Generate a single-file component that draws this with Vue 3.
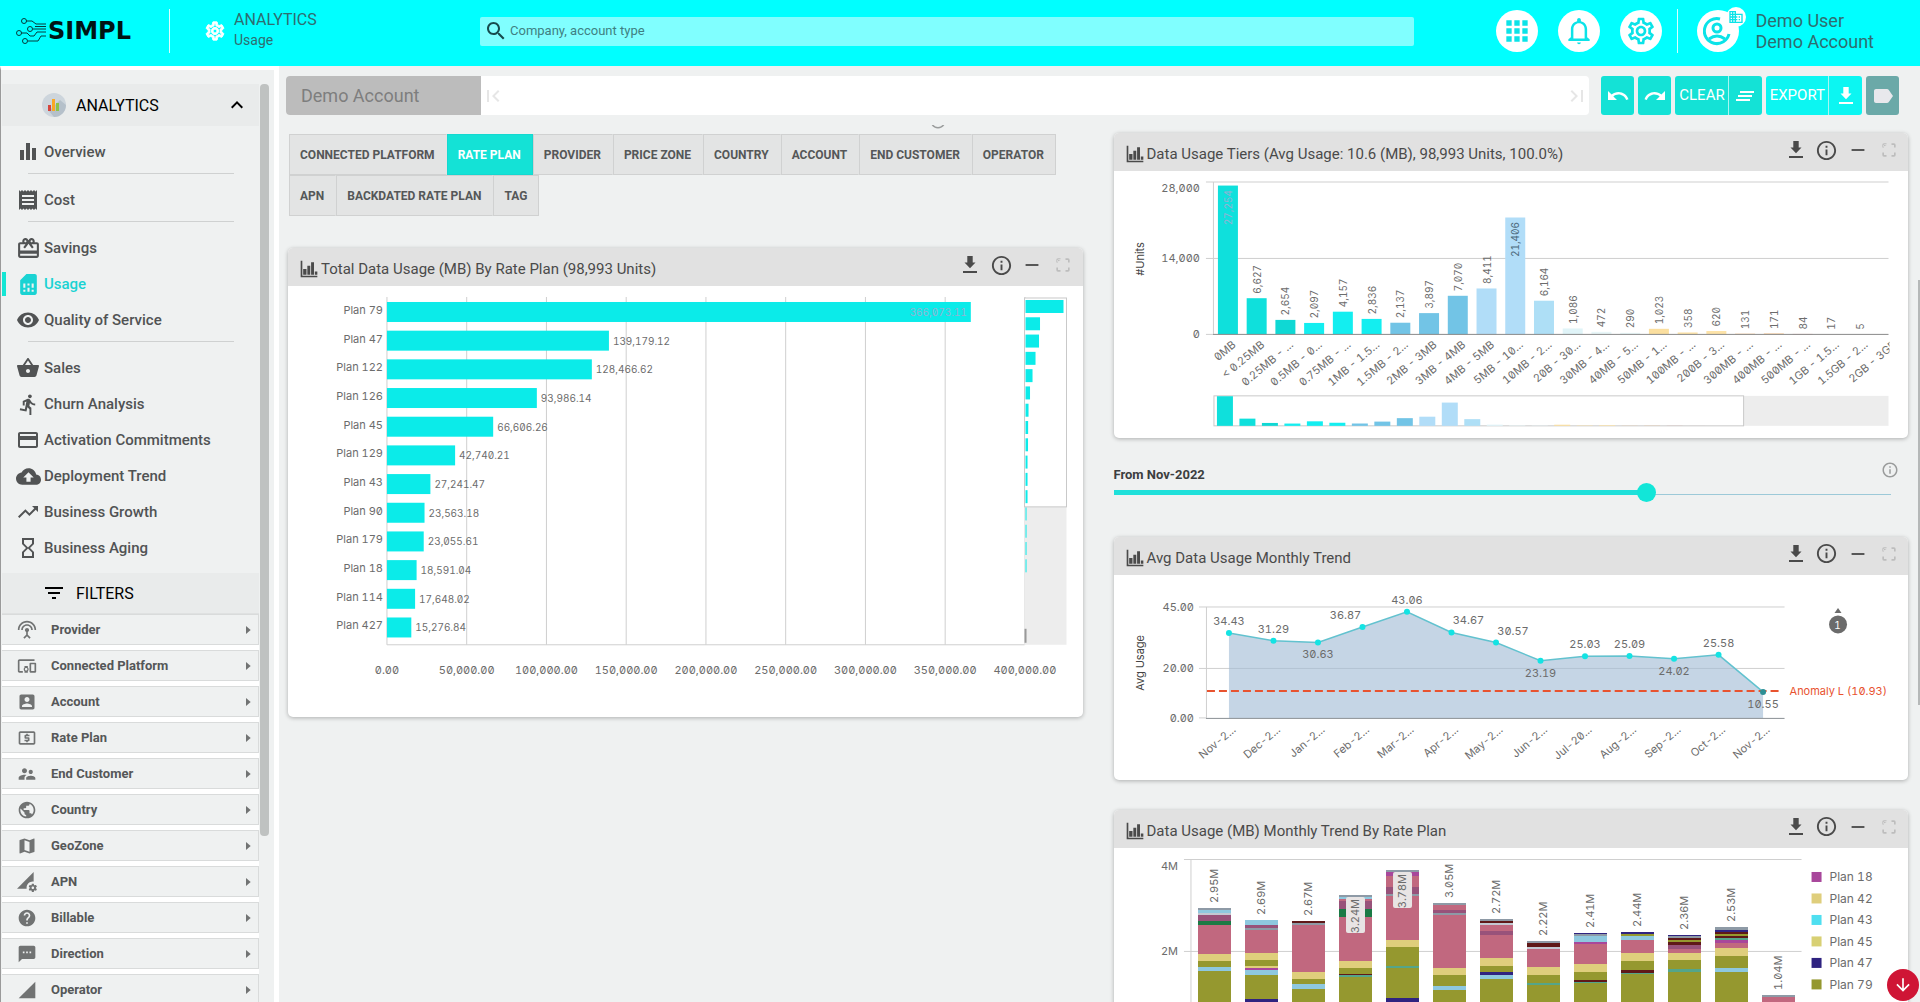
<script setup>
import { h, ref } from 'vue'

const P = {
  apps: 'M4 8h4V4H4v4zm6 12h4v-4h-4v4zm-6 0h4v-4H4v4zm0-6h4v-4H4v4zm6 0h4v-4h-4v4zm6-10v4h4V4h-4zm-6 4h4V4h-4v4zm6 6h4v-4h-4v4zm0 6h4v-4h-4v4z',
  bell: 'M12 22.500c.8 0 1.500-.6 1.500-1.300h-3c0 .7.7 1.300 1.500 1.300zM18.500 17v-6.500c0-3.200-2-5.800-5-6.400V3c0-.8-.7-1.500-1.500-1.500s-1.500.7-1.500 1.500v1.100c-3 .6-5 3.200-5 6.400V17l-2 1.600V20h17v-1.400l-2-1.600zm-2 1h-9v-7.500c0-2.600 1.900-4.700 4.500-4.700s4.500 2.100 4.500 4.700V18z',
  gear: 'M19.430 12.980c.04-.32.07-.64.07-.98s-.03-.66-.07-.98l2.110-1.650c.19-.15.24-.42.12-.64l-2-3.460c-.09-.16-.26-.25-.44-.25-.06 0-.12.01-.17.03l-2.490 1c-.52-.4-1.080-.73-1.690-.98l-.38-2.650C14.460 2.180 14.250 2 14 2h-4c-.25 0-.46.18-.49.42l-.38 2.650c-.61.25-1.170.59-1.690.98l-2.490-1c-.06-.02-.12-.03-.18-.03-.17 0-.34.09-.43.25l-2 3.460c-.13.22-.07.49.12.64l2.110 1.650c-.04.32-.07.65-.07.98s.03.66.07.98l-2.110 1.650c-.19.15-.24.42-.12.64l2 3.460c.09.16.26.25.44.25.06 0 .12-.01.17-.03l2.490-1c.52.4 1.080.73 1.690.98l.38 2.650c.03.24.24.42.49.42h4c.25 0 .46-.18.49-.42l.38-2.650c.61-.25 1.170-.59 1.690-.98l2.490 1c.06.02.12.03.18.03.17 0 .34-.09.43-.25l2-3.460c.12-.22.07-.49-.12-.64l-2.110-1.650zm-1.980-1.710c.04.31.05.52.05.73 0 .21-.02.43-.05.73l-.14 1.130.89.7 1.080.84-.7 1.210-1.270-.51-1.040-.42-.9.68c-.43.32-.84.56-1.250.73l-1.060.43-.16 1.130-.2 1.350h-1.400l-.19-1.350-.16-1.130-1.060-.43c-.43-.18-.83-.41-1.230-.71l-.91-.7-1.060.43-1.270.51-.7-1.210 1.080-.84.89-.7-.14-1.130c-.03-.31-.05-.54-.05-.74s.02-.43.05-.73l.14-1.130-.89-.7-1.080-.84.7-1.210 1.270.51 1.040.42.9-.68c.43-.32.84-.56 1.250-.73l1.060-.43.16-1.130.2-1.350h1.390l.19 1.350.16 1.130 1.060.43c.43.18.83.41 1.230.71l.91.7 1.060-.43 1.270-.51.7 1.210-1.070.85-.89.7.14 1.130zM12 8c-2.210 0-4 1.790-4 4s1.790 4 4 4 4-1.790 4-4-1.790-4-4-4zm0 6c-1.100 0-2-.9-2-2s.9-2 2-2 2 .9 2 2-.9 2-2 2z',
  search: 'M15.500 14h-.79l-.28-.27C15.410 12.590 16 11.110 16 9.500 16 5.910 13.090 3 9.500 3S3 5.910 3 9.500 5.910 16 9.500 16c1.610 0 3.090-.59 4.230-1.570l.27.28v.79l5 4.990L20.490 19l-4.990-5zm-6 0C7.010 14 5 11.990 5 9.500S7.010 5 9.500 5 14 7.010 14 9.500 11.990 14 9.500 14z',
  bars: 'M4 10h4v10H4zM10 3h4v17h-4zM16 8h4v12h-4z',
  receipt: 'M18 17H6v-2h12v2zm0-4H6v-2h12v2zm0-4H6V7h12v2zM3 22l1.500-1.500L6 22l1.500-1.500L9 22l1.500-1.500L12 22l1.500-1.500L15 22l1.500-1.500L18 22l1.500-1.500L21 22V2l-1.500 1.500L18 2l-1.500 1.500L15 2l-1.500 1.500L12 2l-1.500 1.500L9 2 7.500 3.500 6 2 4.500 3.500 3 2v20z',
  gift: 'M20 6h-2.180c.11-.31.18-.65.18-1 0-1.660-1.340-3-3-3-1.050 0-1.960.54-2.500 1.350l-.5.67-.5-.68C10.960 2.540 10.050 2 9 2 7.340 2 6 3.340 6 5c0 .35.07.69.18 1H4c-1.110 0-1.990.89-1.990 2L2 19c0 1.110.89 2 2 2h16c1.110 0 2-.89 2-2V8c0-1.110-.89-2-2-2zm-5-2c.55 0 1 .45 1 1s-.45 1-1 1-1-.45-1-1 .45-1 1-1zM9 4c.55 0 1 .45 1 1s-.45 1-1 1-1-.45-1-1 .45-1 1-1zm11 15H4v-2h16v2zm0-5H4V8h5.080L7 10.830 8.620 12 11 8.760l1-1.360 1 1.360L15.380 12 17 10.830 14.920 8H20v6z',
  sim: 'M19.990 4c0-1.100-.89-2-1.990-2h-8L4 8v12c0 1.100.9 2 2 2h12.010c1.100 0 1.990-.9 1.990-2l-.01-16zM9 19H7v-2h2v2zm8 0h-2v-2h2v2zm-8-4H7v-4h2v4zm4 4h-2v-4h2v4zm0-6h-2v-2h2v2zm4 2h-2v-4h2v4z',
  eye: 'M12 4.500C7 4.500 2.730 7.610 1 12c1.730 4.390 6 7.500 11 7.500s9.270-3.110 11-7.500c-1.730-4.390-6-7.500-11-7.500zM12 17c-2.760 0-5-2.240-5-5s2.240-5 5-5 5 2.240 5 5-2.240 5-5 5zm0-8c-1.660 0-3 1.340-3 3s1.340 3 3 3 3-1.340 3-3-1.340-3-3-3z',
  basket: 'M17.210 9l-4.380-6.560c-.19-.28-.51-.42-.83-.42-.32 0-.64.14-.83.43L6.790 9H2c-.55 0-1 .45-1 1 0 .09.01.18.04.27l2.540 9.270c.23.84 1 1.460 1.920 1.460h13c.92 0 1.690-.62 1.930-1.460l2.540-9.270L23 10c0-.55-.45-1-1-1h-4.790zM9 9l3-4.400L15 9H9zm3 8c-1.100 0-2-.9-2-2s.9-2 2-2 2 .9 2 2-.9 2-2 2z',
  run: 'M13.490 5.480c1.100 0 2-.9 2-2s-.9-2-2-2-2 .9-2 2 .9 2 2 2zm-3.600 13.900l1-4.400 2.100 2v6h2v-7.500l-2.100-2 .6-3c1.300 1.500 3.300 2.500 5.500 2.500v-2c-1.900 0-3.500-1-4.300-2.400l-1-1.600c-.4-.6-1-1-1.700-1-.3 0-.5.1-.8.1l-5.200 2.200v4.700h2v-3.400l1.800-.7-1.600 8.100-4.900-1-.4 2 7 1.400z',
  card: 'M20 4H4c-1.110 0-1.990.89-1.990 2L2 18c0 1.110.89 2 2 2h16c1.110 0 2-.89 2-2V6c0-1.110-.89-2-2-2zm0 14H4v-6h16v6zm0-10H4V6h16v2z',
  cloud: 'M19.350 10.040C18.670 6.590 15.640 4 12 4 9.110 4 6.600 5.640 5.350 8.040 2.340 8.360 0 10.910 0 14c0 3.310 2.690 6 6 6h13c2.760 0 5-2.240 5-5 0-2.640-2.050-4.780-4.650-4.960zM14 13v4h-4v-4H7l5-5 5 5h-3z',
  trend: 'M16 6l2.290 2.290-4.880 4.880-4-4L2 16.590 3.410 18l6-6 4 4 6.300-6.290L22 12V6z',
  glass: 'M6 2v6h.01L6 8.010 10 12l-4 4 .01.01H6V22h12v-5.990h-.01L18 16l-4-4 4-3.990-.01-.01H18V2H6zm10 14.500V20H8v-3.500l4-4 4 4zm-4-5l-4-4V4h8v3.500l-4 4z',
  filter: 'M10 18h4v-2h-4v2zM3 6v2h18V6H3zm3 7h12v-2H6v2z',
  antenna: 'M12 5c-3.870 0-7 3.130-7 7h2c0-2.760 2.240-5 5-5s5 2.240 5 5h2c0-3.870-3.130-7-7-7zm1 9.290c.88-.39 1.500-1.260 1.500-2.290 0-1.380-1.120-2.500-2.500-2.500S9.500 10.620 9.500 12c0 1.020.62 1.900 1.500 2.290v3.300L7.590 21 9 22.410l3-3 3 3L16.410 21 13 17.590v-3.300zM12 1C5.930 1 1 5.930 1 12h2c0-4.970 4.030-9 9-9s9 4.030 9 9h2c0-6.070-4.930-11-11-11z',
  devices: 'M3 6h18V4H3c-1.100 0-2 .9-2 2v12c0 1.100.9 2 2 2h4v-2H3V6zm10 6H9v1.780c-.61.55-1 1.330-1 2.220s.39 1.670 1 2.220V20h4v-1.780c.61-.55 1-1.340 1-2.220s-.39-1.670-1-2.220V12zm-2 5.500c-.83 0-1.500-.67-1.500-1.500s.67-1.500 1.500-1.500 1.500.67 1.500 1.500-.67 1.500-1.500 1.500zM22 8h-6c-.5 0-1 .5-1 1v10c0 .5.5 1 1 1h6c.5 0 1-.5 1-1V9c0-.5-.5-1-1-1zm-1 10h-4v-8h4v8z',
  account: 'M3 5v14c0 1.100.89 2 2 2h14c1.100 0 2-.9 2-2V5c0-1.100-.9-2-2-2H5c-1.110 0-2 .9-2 2zm12 4c0 1.660-1.340 3-3 3s-3-1.340-3-3 1.340-3 3-3 3 1.340 3 3zm-9 8c0-2 4-3.100 6-3.100s6 1.100 6 3.100v1H6v-1z',
  money: 'M11 17h2v-1h1c.55 0 1-.45 1-1v-3c0-.55-.45-1-1-1h-3v-1h4V8h-2V7h-2v1h-1c-.55 0-1 .45-1 1v3c0 .55.45 1 1 1h3v1H9v2h2v1zm9-13H4c-1.110 0-1.990.89-1.990 2L2 18c0 1.110.89 2 2 2h16c1.110 0 2-.89 2-2V6c0-1.110-.89-2-2-2zm0 14H4V6h16v12z',
  people: 'M16.500 12c1.380 0 2.490-1.120 2.490-2.500S17.880 7 16.500 7C15.120 7 14 8.120 14 9.500s1.120 2.500 2.500 2.500zM9 11c1.660 0 2.990-1.340 2.990-3S10.660 5 9 5C7.340 5 6 6.340 6 8s1.340 3 3 3zm7.500 3c-1.830 0-5.500.92-5.500 2.750V19h11v-2.250c0-1.830-3.670-2.750-5.500-2.750zM9 13c-2.330 0-7 1.170-7 3.500V19h7v-2.250c0-.85.33-2.340 2.370-3.470C10.500 13.100 9.660 13 9 13z',
  globe: 'M12 2C6.480 2 2 6.480 2 12s4.480 10 10 10 10-4.480 10-10S17.520 2 12 2zm-1 17.930c-3.950-.49-7-3.850-7-7.930 0-.62.08-1.210.21-1.790L9 15v1c0 1.100.9 2 2 2v1.930zm6.900-2.540c-.26-.81-1-1.390-1.900-1.390h-1v-3c0-.55-.45-1-1-1H8v-2h2c.55 0 1-.45 1-1V7h2c1.100 0 2-.9 2-2v-.41c2.930 1.190 5 4.060 5 7.410 0 2.080-.8 3.970-2.100 5.390z',
  map: 'M20.500 3l-.16.03L15 5.100 9 3 3.360 4.900c-.21.07-.36.25-.36.48V20.500c0 .28.22.5.5.5l.16-.03L9 18.900l6 2.100 5.640-1.900c.21-.07.36-.25.36-.48V3.500c0-.28-.22-.5-.5-.5zM15 19l-6-2.110V5l6 2.110V19z',
  apn: 'M18.990 11.500c.34 0 .67.03 1 .07L20 0 0 20h11.560c-.04-.33-.07-.66-.07-1 0-4.140 3.360-7.500 7.500-7.500zm3.710 7.990c.02-.16.04-.32.04-.49 0-.17-.01-.33-.04-.49l1.060-.83c.09-.08.12-.21.06-.32l-1-1.730c-.06-.11-.19-.15-.31-.11l-1.240.5c-.26-.2-.54-.37-.85-.49l-.19-1.320c-.01-.12-.12-.21-.24-.21h-2c-.12 0-.23.09-.25.21l-.19 1.320c-.3.13-.59.29-.85.49l-1.240-.5c-.11-.04-.24 0-.31.11l-1 1.730c-.06.11-.04.24.06.32l1.060.83c-.02.16-.03.32-.03.49 0 .17.01.33.03.49l-1.060.83c-.09.08-.12.21-.06.32l1 1.730c.06.11.19.15.31.11l1.240-.5c.26.2.54.37.85.49l.19 1.320c.02.12.12.21.25.21h2c.12 0 .23-.09.25-.21l.19-1.320c.3-.13.59-.29.84-.49l1.250.5c.11.04.24 0 .31-.11l1-1.730c.06-.11.03-.24-.06-.32l-1.070-.83zm-3.710 1.010c-.83 0-1.500-.67-1.500-1.500s.67-1.500 1.500-1.500 1.500.67 1.500 1.500-.67 1.500-1.500 1.500z',
  help: 'M12 2C6.480 2 2 6.480 2 12s4.480 10 10 10 10-4.480 10-10S17.520 2 12 2zm1 17h-2v-2h2v2zm2.070-7.750l-.9.92C13.450 12.900 13 13.500 13 15h-2v-.5c0-1.100.45-2.100 1.170-2.830l1.240-1.260c.37-.36.59-.86.59-1.410 0-1.100-.9-2-2-2s-2 .9-2 2H8c0-2.210 1.790-4 4-4s4 1.790 4 4c0 .88-.36 1.680-.93 2.250z',
  sms: 'M20 2H4c-1.100 0-1.990.9-1.990 2L2 22l4-4h14c1.100 0 2-.9 2-2V4c0-1.100-.9-2-2-2zM9 11H7V9h2v2zm4 0h-2V9h2v2zm4 0h-2V9h2v2z',
  signal: 'M2 22h20V2z',
  undo: 'M12.500 8c-2.650 0-5.050.99-6.900 2.600L2 7v9h9l-3.620-3.620c1.390-1.160 3.160-1.880 5.120-1.880 3.540 0 6.550 2.310 7.600 5.500l2.370-.78C21.080 11.030 17.150 8 12.500 8z',
  redo: 'M18.400 10.600C16.550 8.990 14.150 8 11.500 8c-4.650 0-8.580 3.030-9.960 7.220L3.900 16c1.050-3.190 4.050-5.500 7.600-5.500 1.950 0 3.730.72 5.120 1.880L13 16h9V7l-3.600 3.600z',
  clear: 'M5 13h14v-2H5v2zm-2 4h14v-2H3v2zM7 7v2h14V7H7z',
  download: 'M17.500 9.500H14.700V3H9.300v6.500H6.500L12 15.200l5.500-5.700zM5 18v2h14v-2H5z',
  label: 'M17.630 5.840C17.270 5.330 16.670 5 16 5L5 5.010C3.900 5.010 3 5.900 3 7v10c0 1.100.9 1.990 2 1.990L16 19c.67 0 1.270-.33 1.630-.84L22 12l-4.370-6.160z',
  info: 'M11 17h2v-6h-2v6zm1-15C6.480 2 2 6.480 2 12s4.480 10 10 10 10-4.480 10-10S17.520 2 12 2zm0 18c-4.410 0-8-3.590-8-8s3.590-8 8-8 8 3.590 8 8-3.590 8-8 8zM11 9h2V7h-2v2z',
  minus: 'M5 11h14v2H5z',
  full: 'M5 8V7a2 2 0 0 1 2-2h2V4H6a2 2 0 0 0-2 2v3h2V6h3M4 15v3a2 2 0 0 0 2 2h3v-2H6v-3zM15 4v2h3v3h2V6a2 2 0 0 0-2-2zM18 15v3h-3v2h3a2 2 0 0 0 2-2v-3z',
  up: 'M12 8l-6 6 1.410 1.410L12 10.830l4.590 4.580L18 14z',
  right: 'M9 6v12l7-6z',
  down: 'M20 12l-1.410-1.410L13 16.170V4h-2v12.170l-5.580-5.590L4 12l8 8z',
  first: 'M18.410 16.590L13.820 12l4.590-4.590L17 6l-6 6 6 6zM6 6h2v12H6z',
  last: 'M5.590 7.410L10.180 12l-4.590 4.590L7 18l6-6-6-6zM16 6h2v12h-2z',
  chart: 'M2 2h2v18h18v2H2zM5 12h4v7H5zM10 8h3.500v11H10zM14.500 4H18v15h-3.500zM19 15h3v4h-3z',
  building: 'M12 7V3H2v18h20V7H12zM6 19H4v-2h2v2zm0-4H4v-2h2v2zm0-4H4V9h2v2zm0-4H4V5h2v2zm4 12H8v-2h2v2zm0-4H8v-2h2v2zm0-4H8V9h2v2zm0-4H8V5h2v2zm10 12h-8v-2h2v-2h-2v-2h2v-2h-2V9h8v10zm-2-8h-2v2h2v-2zm0 4h-2v2h2v-2z',
}

const Icon = (p) => h('svg', { viewBox: '0 0 24 24', width: p.s || 22, height: p.s || 22, fill: 'currentColor', 'aria-hidden': 'true' }, [h('path', { d: P[p.n] })])
Icon.props = ['n', 's']

const CardHead = (p) => h('header', { class: 'card-head' }, [
  h(Icon, { n: 'chart', s: 20 }),
  h('h2', p.title),
  h('div', { class: 'card-tools' }, [
    ['download', 'Download', 24], ['info', 'Info', 23], ['minus', 'Collapse', 22], ['full', 'Full screen', 20],
  ].map(([n, t, s]) => h('button', { type: 'button', 'aria-label': t, class: 'tool-' + n }, [h(Icon, { n, s })]))),
])
CardHead.props = ['title']

const nav = [
  [['bars', 'Overview', 24]],
  [['receipt', 'Cost', 24]],
  [['gift', 'Savings', 25], ['sim', 'Usage', 25], ['eye', 'Quality of Service', 24]],
  [['basket', 'Sales', 24], ['run', 'Churn Analysis', 23], ['card', 'Activation Commitments', 24], ['cloud', 'Deployment Trend', 25], ['trend', 'Business Growth', 24], ['glass', 'Business Aging', 24]],
]
const filters = [
  ['antenna', 'Provider'], ['devices', 'Connected Platform'], ['account', 'Account'], ['money', 'Rate Plan'],
  ['people', 'End Customer'], ['globe', 'Country'], ['map', 'GeoZone'], ['apn', 'APN'],
  ['help', 'Billable'], ['sms', 'Direction'], ['signal', 'Operator'],
]
const tabs = [
  ['CONNECTED PLATFORM', 'RATE PLAN', 'PROVIDER', 'PRICE ZONE', 'COUNTRY', 'ACCOUNT', 'END CUSTOMER', 'OPERATOR'],
  ['APN', 'BACKDATED RATE PLAN', 'TAG'],
]
const month = ref(69)

const fmt = (v, d = 0) => v.toLocaleString('en-US', { minimumFractionDigits: d, maximumFractionDigits: d })

/* Usage by plan */
const plans = [
  ['Plan 79', 366073.11], ['Plan 47', 139179.12], ['Plan 122', 128466.62], ['Plan 126', 93986.14],
  ['Plan 45', 66606.26], ['Plan 129', 42740.21], ['Plan 43', 27241.47], ['Plan 90', 23563.18],
  ['Plan 179', 23055.61], ['Plan 18', 18591.04], ['Plan 114', 17648.02], ['Plan 427', 15276.84],
].map(([n, v], i) => ({ n, v, w: v / 50000 * 79.8, y: 16 + i * 28.7 }))
const mini = [38, 14.500, 13.500, 10, 7, 4.500, 3, 2.600, 2.500, 2, 2, 2, 1, 1, 1, 1]

/* Usage tiers */
const tiers = [
  ['0MB', 27254, '#0fe0dc'], ['< 0.25MB', 6627, '#0fe0dc'], ['0.25MB - ...', 2654, '#0fd8d4'], ['0.5MB - 0...', 2097, '#13eef0'],
  ['0.75MB - ...', 4157, '#13eef0'], ['1MB - 1.5...', 2836, '#13eef0'], ['1.5MB - 2...', 2137, '#72c4e6'], ['2MB - 3MB', 3897, '#72c4e6'],
  ['3MB - 4MB', 7070, '#72c4e6'], ['4MB - 5MB', 8411, '#b1ddf8'], ['5MB - 10...', 21406, '#b1ddf8'], ['10MB - 2...', 6164, '#aedff6'],
  ['20B - 30...', 1086, '#e0f4f8'], ['30MB - 4...', 472, '#e8f6f8'], ['40MB - 5...', 290, '#e8f6f8'], ['50MB - 1...', 1023, '#fbdf9f'],
  ['100MB - ...', 358, '#fde3a8'], ['200B - 3...', 620, '#fde3a8'], ['300MB - ...', 131, '#f7c58c'], ['400MB - ...', 171, '#f7c58c'],
  ['500MB - ...', 84, '#d98a80'], ['1GB - 1.5...', 17, '#d98a80'], ['1.5GB - 2...', 5, '#d98a80'], ['2GB - 3GB', 0, '#d98a80'],
].map(([n, v, c], i) => ({ n, v, c, x: 104 + i * 28.75, hgt: v * 153 / 28000 }))

/* Monthly average */
const avg = [
  ['Nov-2...', 34.430, 0, -12], ['Dec-2...', 31.290, 0, -12], ['Jan-2...', 30.630, 0, 12], ['Feb-2...', 36.870, -17, -12],
  ['Mar-2...', 43.060, 0, -12], ['Apr-2...', 34.670, 17, -12], ['May-2...', 30.570, 17, -12], ['Jun-2...', 23.190, 0, 12],
  ['Jul-20...', 25.030, 0, -12], ['Aug-2...', 25.090, 0, -12], ['Sep-2...', 24.020, 0, 12], ['Oct-2...', 25.580, 0, -12], ['Nov-2...', 10.550, 0, 12],
].map(([n, v, dx, dy], i) => ({ n, v, dx, dy, x: 115 + i * 44.540, y: 143 - v * 2.467 }))
const line = avg.map((p) => `${p.x},${p.y}`).join(' ')

/* Stacked monthly trend: a colour letter followed by the top edge of the segment */
const K = { g: '#8e9aa6', b: '#8ec8df', u: '#98527a', e: '#1b7a45', p: '#c1687f', y: '#dfce7c', o: '#95982f', n: '#2f2380', m: '#5f1818', r: '#a8479b', t: '#54a58a', l: '#c3c8d2' }
const stacks = [
  ['2.95M', 'g60 b62 l65 u67 e73 p77 y106 o113 b119 o123'],
  ['2.69M', 'b72 u77 g80 p82 y105 o112 y118 r120 b122 o127 n151'],
  ['2.67M', 'm73 g75 p77 y124 o131 b136 o141'],
  ['3.24M', 'g47 b49 p51 u53 e61 p69 y113 o120 m126 t127 o129', 1],
  ['3.78M', 'g22 r24 p28 u39 g46 p48 y92 o99 t118 o120 n150', 1],
  ['3.05M', 'g55 p57 u62 g65 p67 y120 o127 b138 o142'],
  ['2.72M', 'g71 m73 l75 p77 u83 p87 y110 o118 n124 b127 o131'],
  ['2.22M', 'g93 m95 l99 p101 y119 o127 t135 o137'],
  ['2.41M', 'n85 g86 b88 r94 p96 y116 o124 m132 t134 o135'],
  ['2.44M', 'n84 o86 b88 p92 y105 o113 m122 t125 o126'],
  ['2.36M', 'n87 g88 m90 o92 m94 u97 p101 y105 o112 t121 o124'],
  ['2.53M', 'g79 n82 m84 o86 m88 t90 r92 p95 y100 o108 b120 o124'],
  ['1.04M', 'g147 p149'],
].map(([label, s, boxed], i) => {
  const a = s.split(' ').map((q) => ({ c: K[q[0]], y: +q.slice(1) }))
  return { label, boxed, x: 84 + i * 47.050, top: a[0].y, seg: a.map((q, j) => ({ ...q, hgt: (a[j + 1] ? a[j + 1].y : 196) - q.y })) }
})
const legend = [['Plan 18', '#a8479b'], ['Plan 42', '#dfce7c'], ['Plan 43', '#4fdff0'], ['Plan 45', '#d8d074'], ['Plan 47', '#2f2380'], ['Plan 79', '#95982f']]
</script>

<template>
  <div class="app">
    <header class="top">
      <a href="#" class="logo" aria-label="SIMPL">
        <svg width="30" height="28" viewBox="0 0 30 28" fill="none" stroke="#063c3c" stroke-width="1">
          <path d="M10 4h6l4 3h10M17 12h13M5 16h6l3 3h4l3-4h9M12 24h10l3-5h5M19 9.500h11" />
          <circle cx="8" cy="4" r="2.500" /><circle cx="14" cy="12" r="2.500" /><circle cx="3" cy="16" r="2.500" /><circle cx="9" cy="24" r="2.500" />
        </svg>
        <span>SIMPL</span>
      </a>
      <div class="crumb">
        <Icon n="gear" s="22" />
        <div><h1>ANALYTICS</h1><p>Usage</p></div>
      </div>
      <label class="search">
        <Icon n="search" s="24" />
        <input type="text" placeholder="Company, account type" aria-label="Search" />
      </label>
      <div class="round-btns">
        <button type="button" aria-label="Apps"><Icon n="apps" s="32" /></button>
        <button type="button" aria-label="Notifications"><Icon n="bell" s="30" /></button>
        <button type="button" aria-label="Settings"><Icon n="gear" s="32" /></button>
      </div>
      <div class="user">
        <div class="avatar">
          <svg width="30" height="30" viewBox="0 0 30 30" fill="none" stroke="#0be3e8" stroke-width="3">
            <path d="M17 3A12.500 12.500 0 1 0 26 18" /><circle cx="14" cy="12" r="4" /><path d="M6 23q8-6 16 0" />
          </svg>
          <span class="badge"><Icon n="building" s="16" /></span>
        </div>
        <p>Demo User<br />Demo Account</p>
      </div>
    </header>

    <div class="body">
      <aside class="side">
        <div class="side-scroll">
          <button type="button" class="side-head">
            <svg width="24" height="24" viewBox="0 0 24 24"><circle cx="12" cy="12" r="12" fill="#cdd5dc" /><path d="M12 24A12 12 0 0 0 24 12L18 7 7 18z" fill="#b5c0ca" /><path d="M6 12h3v6H6z" fill="#d6453d" /><path d="M10 6h3v12h-3z" fill="#f9a825" /><path d="M14 10h3v8h-3z" fill="#8bc34a" /></svg>
            <span>ANALYTICS</span>
            <Icon n="up" s="24" />
          </button>
          <nav>
            <ul v-for="(group, gi) in nav" :key="gi">
              <li v-for="[ic, name, s] in group" :key="name">
                <a href="#" :class="{ on: name === 'Usage' }"><i><Icon :n="ic" :s="s" /></i>{{ name }}</a>
              </li>
            </ul>
          </nav>
          <div class="side-head filt"><Icon n="filter" s="24" /><span>FILTERS</span></div>
          <button v-for="[ic, name] in filters" :key="name" type="button" class="filter">
            <i><Icon :n="ic" s="20" /></i><span>{{ name }}</span><Icon n="right" s="16" />
          </button>
        </div>
        <div class="side-bar"></div>
      </aside>

      <main>
        <div class="toolbar">
          <div class="path">
            <span class="acct">Demo Account</span>
            <Icon n="first" s="24" /><Icon n="last" s="24" />
          </div>
          <button type="button" aria-label="Undo"><Icon n="undo" s="24" /></button>
          <button type="button" aria-label="Redo"><Icon n="redo" s="24" /></button>
          <button type="button" class="split"><span>CLEAR</span><b><Icon n="clear" s="24" /></b></button>
          <button type="button" class="split export"><span>EXPORT</span><b><Icon n="download" s="24" /></b></button>
          <button type="button" class="tag" aria-label="Tag"><Icon n="label" s="24" /></button>
        </div>

        <div class="view">
          <section class="col">
            <div class="peek"><Icon n="info" s="18" /></div>
            <div class="tabs">
              <div v-for="(row, ri) in tabs" :key="ri" class="tab-row">
                <button v-for="t in row" :key="t" type="button" :class="{ on: t === 'RATE PLAN' }">{{ t }}</button>
              </div>
            </div>
            <article class="card">
              <CardHead title="Total Data Usage (MB) By Rate Plan (98,993 Units)" />
              <svg class="chart" viewBox="0 0 795 431">
                <path v-for="i in 9" :key="i" class="grid" :d="`M${19.200 + i * 79.8} 11V359`" />
                <path class="grid" d="M99 359H737" />
                <g v-for="p in plans" :key="p.n">
                  <rect x="99" :y="p.y" :width="p.w" height="20" fill="#0bebe9" />
                  <text class="t12 end" x="95" :y="p.y + 8">{{ p.n }}</text>
                  <text v-if="p.v < 3e5" class="t11" :x="p.w + 103" :y="p.y + 10">{{ fmt(p.v, 2) }}</text>
                  <text v-else class="t11 end pale" :x="p.w + 95" :y="p.y + 10">{{ fmt(p.v, 2) }}</text>
                </g>
                <text v-for="i in 9" :key="i" class="t12 mid" :x="19.200 + i * 79.8" y="384">{{ fmt((i - 1) * 50000, 2) }}</text>
                <rect x="737" y="221" width="42" height="138" fill="#ededed" />
                <rect x="737" y="12" width="42" height="209" fill="#fff" stroke="#c9c9c9" />
                <rect v-for="(w, i) in mini" :key="i" x="738" :y="14 + i * 17.300" :width="w" height="13" fill="#0bebe9" />
                <rect x="737" y="343" width="2" height="14" fill="#999" />
              </svg>
            </article>
          </section>

          <section class="col right">
            <article class="card">
              <CardHead title="Data Usage Tiers (Avg Usage: 10.6 (MB), 98,993 Units, 100.0%)" />
              <svg class="chart" viewBox="0 0 795 267">
                <path class="grid" d="M92 11H775M92 87.500H775M92 163.500H99M99.500 11V163" />
                <text class="t12 end" x="86" y="17">28,000</text>
                <text class="t12 end" x="86" y="87">14,000</text>
                <text class="t12 end" x="86" y="163">0</text>
                <text class="t12 mid dark" transform="translate(26 88) rotate(-90)">#Units</text>
                <g v-for="t in tiers" :key="t.n">
                  <rect :x="t.x" :y="163.500 - t.hgt" width="20" :height="t.hgt" :fill="t.c" />
                  <text v-if="t.v > 2e4" class="t11 end" :class="t.v > 25e3 ? 'pale' : 'deep'" :transform="`translate(${t.x + 10} ${168 - t.hgt}) rotate(-90)`">{{ fmt(t.v) }}</text>
                  <text v-else-if="t.v" class="t11" :transform="`translate(${t.x + 10} ${159 - t.hgt}) rotate(-90)`">{{ fmt(t.v) }}</text>
                </g>
                <path d="M99 163.500H775" stroke="#8a8a8a" />
                <svg width="776" height="220">
                  <text v-for="t in tiers" :key="t.n" class="t12 end" :transform="`translate(${t.x + 16} 172) rotate(-40)`">{{ t.n }}</text>
                </svg>
                <rect x="630" y="225" width="145" height="30" fill="#ededed" />
                <rect x="100" y="225" width="530" height="30" fill="#fff" stroke="#c9c9c9" />
                <rect v-for="(t, i) in tiers" :key="t.n" :x="103 + i * 22.500" :y="255 - t.v / 920" width="16" :height="t.v / 920" :fill="t.c" />
              </svg>
            </article>

            <div class="slider">
              <div class="slider-top"><label for="from">From Nov-2022</label><Icon n="info" s="18" /></div>
              <input id="from" v-model="month" type="range" min="0" max="100" :style="{ '--at': month + '%' }" />
            </div>

            <article class="card">
              <CardHead title="Avg Data Usage Monthly Trend" />
              <svg class="chart" viewBox="0 0 795 205">
                <path class="grid" d="M85 32H671M85 93.500H671M85 143H92M92.500 32V143" />
                <polygon :points="`115,143 ${line} 649.500,143`" fill="#a2bbd5" fill-opacity=".62" />
                <path d="M92 143.500H671" stroke="#8a8f94" />
                <polyline :points="line" fill="none" stroke="#62c2cf" stroke-width="1.500" />
                <path d="M93 116H668" stroke="#e8532f" stroke-width="2" stroke-dasharray="8 4" />
                <g v-for="p in avg" :key="p.x">
                  <circle :cx="p.x" :cy="p.y" r="3" :fill="p.v < 11 ? '#2d8f95' : '#14e3e3'" />
                  <text class="t12 mid" :x="p.x + p.dx" :y="p.y + p.dy">{{ fmt(p.v, 2) }}</text>
                  <text class="t12 end" :transform="`translate(${p.x + 5} 153) rotate(-40)`">{{ p.n }}</text>
                </g>
                <text class="t12 end" x="80" y="32">45.00</text>
                <text class="t12 end" x="80" y="93">20.00</text>
                <text class="t12 end" x="80" y="143">0.00</text>
                <text class="t12 mid dark" transform="translate(26 88) rotate(-90)">Avg Usage</text>
                <text class="t12 red" x="676" y="116">Anomaly L (10.93)</text>
                <path d="M721 38h7l-3.500-5z" fill="#6b6b6b" /><circle cx="724.500" cy="49.500" r="9" fill="#6b6b6b" />
                <text class="t11 mid white" x="724" y="50">1</text>
              </svg>
            </article>

            <article class="card">
              <CardHead title="Data Usage (MB) Monthly Trend By Rate Plan" />
              <svg class="chart" viewBox="0 0 795 260">
                <path class="grid" d="M70 11.500H688M70 103.500H688M77 11V196H688" />
                <text class="t12 end" x="64" y="18">4M</text>
                <text class="t12 end" x="64" y="103">2M</text>
                <g v-for="s in stacks" :key="s.label">
                  <rect v-for="q in s.seg" :key="q.y" :x="s.x" :y="q.y" width="33" :height="q.hgt" :fill="q.c" shape-rendering="crispEdges" />
                  <rect v-if="s.boxed" :x="s.x + 7" :y="s.top + 2" width="19" height="36" rx="2" fill="#e8e4e4" />
                  <text class="t12" :class="{ end: s.boxed }" :transform="`translate(${s.x + 16} ${s.boxed ? s.top + 4 : s.top - 5}) rotate(-90)`">{{ s.label }}</text>
                </g>
                <g v-for="([n, c], i) in legend" :key="n">
                  <rect x="698" :y="24 + i * 21.500" width="10" height="10" :fill="c" />
                  <text class="t13" x="716" :y="29 + i * 21.500">{{ n }}</text>
                </g>
              </svg>
            </article>
          </section>
        </div>
        <div class="page-bar"></div>
      </main>
    </div>
    <button type="button" class="fab" aria-label="Scroll down"><Icon n="down" s="20" /></button>
  </div>
</template>

<style>
body { background: #eff1f1; }
button { font: inherit; color: inherit; border: 0; padding: 0; background: none; cursor: pointer; }
.card-head { height: 38px; display: flex; align-items: center; padding: 4px 4px 0 11px; background: #e1e1e1; color: #4a4a4a; box-sizing: border-box; border-radius: 5px 5px 0 0; }
.card-head h2 { flex: 1; margin: 0 0 0 2px; font: 400 15px/24px Roboto, sans-serif; white-space: nowrap; }
.card-tools { display: flex; padding-bottom: 8px; }
.card-tools button { width: 31px; height: 24px; display: flex; align-items: center; justify-content: center; }
.card-tools .tool-full { color: #bdbdbd; }
</style>

<style scoped>
.app { height: 100vh; display: flex; flex-direction: column; overflow: hidden; font-family: Roboto, sans-serif; color: #4d4f50; }
p, h1, ul { margin: 0; padding: 0; list-style: none; }

.top { flex: none; height: 66px; background: #00ffff; display: flex; align-items: center; color: #2f6d70; box-sizing: border-box; padding-bottom: 4px; }
.logo { display: flex; align-items: center; gap: 2px; width: 153px; height: 44px; padding-left: 16px; border-right: 1px solid #d8ffff; color: #001414; text-decoration: none; font: 700 24px/28px "DejaVu Sans", sans-serif; }
.crumb { width: 276px; display: flex; align-items: center; gap: 8px; padding-left: 34px; }
.crumb svg { color: #fff; stroke: #fff; }
.crumb h1 { font: 400 16px/20px Roboto, sans-serif; }
.crumb p { font-size: 14px; line-height: 20px; padding-bottom: 3px; }
.search { flex: 1; height: 29px; display: flex; align-items: center; padding-left: 4px; background: #80ffff; border-radius: 2px; color: #174b4d; box-sizing: border-box; }
.search input { flex: 1; border: 0; outline: 0; background: none; font: 13px/20px Roboto, sans-serif; }
.search input::placeholder { color: #3f7f82; opacity: 1; }
.round-btns { display: flex; gap: 20px; padding: 0 15px 0 82px; }
.round-btns button { width: 42px; height: 42px; border-radius: 50%; background: #fff; color: #0be3e8; display: flex; align-items: center; justify-content: center; }
.user { display: flex; align-items: center; gap: 17px; height: 44px; border-left: 1px solid #d8ffff; padding: 0 46px 0 19px; }
.user p { font-size: 18px; line-height: 21px; white-space: nowrap; }
.avatar { position: relative; width: 42px; height: 42px; border-radius: 50%; background: #fff; display: flex; align-items: center; justify-content: center; }
.badge { position: absolute; right: -7px; top: -3px; width: 20px; height: 20px; border-radius: 50%; background: #fff; color: #0be3e8; display: flex; align-items: center; justify-content: center; }

.body { flex: 1; display: flex; min-height: 0; }
.side { flex: none; width: 273px; display: flex; border-left: 1px solid #9a9a9a; border-right: 5px solid #fff; border-top: 4px solid #fff; background: #eff1f1; overflow: hidden; }
.side-scroll { width: 257px; padding: 14px 0 0 1px; overflow: hidden; }
.side-bar { width: 9px; height: 752px; margin: 14px 0 0 1px; background: #bfc2c1; border-radius: 4px; }
.side-head { width: 100%; height: 42px; display: flex; align-items: center; padding: 0 10px 0 40px; background: #e9ebeb; color: #000; box-sizing: border-box; font-size: 16px; text-align: left; }
.side-head span { flex: 1; padding-left: 10px; }
.side-head.filt { height: 41px; border-bottom: 1px solid #dfe1e1; }
nav { padding: 8px 0 7px; }
nav ul + ul { position: relative; padding-top: 12px; }
nav ul + ul::before { content: ""; position: absolute; left: 26px; top: 3px; width: 206px; height: 1px; background: #cfd1d1; }
nav a { height: 36px; display: flex; align-items: center; gap: 3px; font-size: 15px; font-weight: 500; color: #515354; text-decoration: none; }
nav i { width: 26px; margin-left: 13px; display: flex; justify-content: center; }
nav a.on { color: #1ad3d3; background: linear-gradient(#14e6d4, #14e6d4) 0 6px / 4px 24px no-repeat; }
.filter { width: 100%; height: 31px; margin-bottom: 5px; display: flex; align-items: center; border: solid #d9dbdb; border-width: 1px 1px 1px 0; color: #717373; box-shadow: 0 5px 0 #fff; font-size: 13px; font-weight: 500; text-align: left; padding-right: 2px; box-sizing: border-box; }
.filter i { width: 20px; margin-left: 15px; display: flex; }
.filter span { flex: 1; padding-left: 14px; color: #555758; font-weight: 700; }

main { flex: 1; position: relative; min-width: 0; display: flex; flex-direction: column; }
.toolbar { display: flex; height: 39px; padding: 10px 21px 10px 7px; gap: 4px; color: #fff; }
.path { flex: 1; display: flex; align-items: center; background: #fff; color: #e6e6e6; border-radius: 4px; margin-right: 8px; }
.path svg:last-child { margin-left: auto; }
.acct { align-self: stretch; width: 195px; padding-left: 15px; box-sizing: border-box; background: #bcbcbc; color: #7e7e7e; border-radius: 4px 0 0 4px; font-size: 18px; line-height: 39px; }
.toolbar button { min-width: 33px; border-radius: 3px; background: #14e2d6; display: flex; align-items: center; justify-content: center; }
.toolbar .split { font-size: 15px; align-items: stretch; }
.split span { padding: 0 3px 0 4px; line-height: 39px; }
.split b { width: 33px; border-left: 1px solid #a8f7f2; display: flex; align-items: center; justify-content: center; }
.toolbar .export { background: #0cf6f2; }
.toolbar .tag { background: #6ba9a8; color: #e8e8ec; }

.view { flex: 1; min-height: 0; overflow: hidden; display: grid; grid-template-columns: 1fr 1fr; align-items: start; gap: 31px; padding: 0 12px 0 9px; }
.peek { height: 9px; display: flex; align-items: center; justify-content: center; padding-left: 507px; width: 286px; color: #9a9c9c; overflow: hidden; }
.peek svg { margin-top: -17px; }
.tab-row { display: flex; height: 41px; }
.tabs { padding: 0 0 32px 1px; }
.tab-row button { height: 41px; padding: 0 11px 0 10px; border: 1px solid #d0d1d1; border-right-color: transparent; background: #e3e4e4; font-size: 12px; font-weight: 700; color: #555758; white-space: nowrap; }
.tab-row button:last-child { border-right-color: #d0d1d1; }
.tab-row button.on { background: #14e2d6; border-color: #14d8d0; color: #fff; }
.right { padding-top: 8px; }
.card { background: #fff; border-radius: 5px; box-shadow: 0 1px 4px rgba(0, 0, 0, .28); margin-bottom: 30px; }
.chart { display: block; width: 100%; height: auto; font-family: Inter, sans-serif; font-feature-settings: "zero", "tnum"; }
.chart text { fill: #6c6c6c; dominant-baseline: central; }
.grid { stroke: #cfcfcf; fill: none; }
.t11 { font-size: 10px; }
.t12 { font-size: 11px; }
.t13 { font-size: 12px; }
.end { text-anchor: end; }
.mid { text-anchor: middle; }
.chart .pale { fill: #8fb4d4; }
.chart .deep { fill: #4d6a7c; }
.chart .dark { fill: #444; }
.chart .red { fill: #e8532f; }
.chart .white { fill: #fff; }
.slider { margin: -7px 17px 35px 0; }
.slider-top { display: flex; justify-content: space-between; margin-right: -8px; height: 22px; font-size: 13px; line-height: 28px; font-weight: 700; color: #3c3e3f; }
.slider-top svg { color: #9a9c9c; }
.slider input { appearance: none; display: block; width: 100%; height: 19px; margin: 0; background: linear-gradient(#1fe0da, #1fe0da) 0 7px / var(--at) 5px no-repeat, linear-gradient(#9cc9d8, #9cc9d8) 0 11px / 100% 1px no-repeat; }
.slider input::-webkit-slider-thumb { appearance: none; width: 19px; height: 19px; border-radius: 50%; background: #12e6d8; }
.page-bar { position: absolute; right: 0; top: 214px; width: 2px; height: 425px; background: #b5b8b8; }
.fab { position: fixed; right: 1px; bottom: 1px; width: 32px; height: 32px; border-radius: 50%; background: #cf1535; color: #fff; display: flex; align-items: center; justify-content: center; }
</style>
